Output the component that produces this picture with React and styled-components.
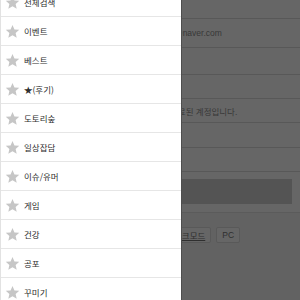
import React from "react";
import styled, { createGlobalStyle } from "styled-components";

const GlobalStyle = createGlobalStyle`
  html, body {
    margin: 0;
    padding: 0;
    overflow: hidden;
  }
  body {
    font-family: "Liberation Sans", "Noto Sans CJK KR", sans-serif;
  }
`;

const Screen = styled.div`
  position: relative;
  width: 300px;
  height: 300px;
  overflow: hidden;
  background: #f5f5f5;
`;

const Page = styled.div`
  display: flex;
  flex-direction: column;
`;

const InfoRow = styled.div`
  height: ${({ h }) => h}px;
  box-sizing: border-box;
  border-bottom: 1px solid #dcdcdc;
  background: #fff;
  display: flex;
  align-items: center;
  padding-left: ${({ indent }) => indent || 0}px;
  font-size: 8.5px;
  color: #8e8e8e;
  white-space: nowrap;
`;

const SearchArea = styled.div`
  background: #fff;
  padding: 7px 8px 8px 150px;
  border-bottom: 1px solid #e4e4e4;
`;

const SearchBox = styled.div`
  height: 25px;
  background: #d2d2d2;
`;

const ButtonBar = styled.div`
  display: flex;
  gap: 5px;
  padding: 14px 0 0 168px;
`;

const SmallButton = styled.div`
  height: 16px;
  box-sizing: border-box;
  padding: 0 5px;
  border: 1px solid #dedede;
  background: #fff;
  border-radius: 2px;
  display: flex;
  align-items: center;
  font-size: 8.5px;
  color: #777;
  text-decoration: ${({ link }) => (link ? "underline" : "none")};
`;

const Overlay = styled.div`
  position: absolute;
  inset: 0;
  background: rgba(0, 0, 0, 0.6);
`;

const Drawer = styled.nav`
  position: absolute;
  top: 0;
  left: 0;
  bottom: 0;
  width: 182px;
  box-sizing: border-box;
  background: #fff;
  border-left: 1px solid #e2e2e2;
  border-right: 1px solid #4e4e4e;
  overflow: hidden;
`;

const Menu = styled.ul`
  list-style: none;
  margin: -12px 0 0;
  padding: 0;
`;

const MenuItem = styled.li`
  height: 29px;
  box-sizing: border-box;
  border-bottom: 1px solid #e6e6e6;
  display: flex;
  align-items: center;
  gap: 4px;
  padding-left: 4px;
  font-family: "Noto Sans CJK KR", sans-serif;
  font-size: 8.5px;
  color: #2e2e2e;
`;

const Star = () => (
  <svg width="15" height="15" viewBox="0 0 24 24">
    <path
      d="M12 1.5l3.1 7.1 7.7.7-5.8 5.1 1.7 7.6L12 18.1 5.3 22l1.7-7.6L1.2 9.3l7.7-.7z"
      fill="#c6c6c6"
    />
  </svg>
);

const menu = [
  "전체검색",
  "이벤트",
  "베스트",
  "★(후기)",
  "도토리숲",
  "일상잡담",
  "이슈/유머",
  "게임",
  "건강",
  "공포",
  "꾸미기",
];

export default function App() {
  return (
    <>
      <GlobalStyle />
      <Screen>
        <Page>
          <InfoRow h={19} />
          <InfoRow h={29} indent={174}>
            @naver.com
          </InfoRow>
          <InfoRow h={27} />
          <InfoRow h={24} />
          <InfoRow h={24} indent={170}>
            만료된 계정입니다.
          </InfoRow>
          <InfoRow h={25} />
          <InfoRow h={24} indent={149}>
            고객센터
          </InfoRow>
          <SearchArea>
            <SearchBox />
          </SearchArea>
          <ButtonBar>
            <SmallButton link>다크모드</SmallButton>
            <SmallButton>PC</SmallButton>
          </ButtonBar>
        </Page>
        <Overlay />
        <Drawer>
          <Menu>
            {menu.map((m) => (
              <MenuItem key={m}>
                <Star />
                {m}
              </MenuItem>
            ))}
          </Menu>
        </Drawer>
      </Screen>
    </>
  );
}
